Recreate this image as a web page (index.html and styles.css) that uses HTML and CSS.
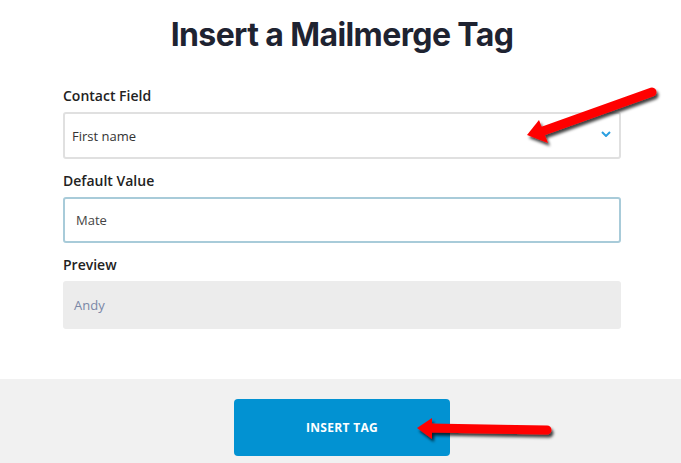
FILE: index.html
```html
<!DOCTYPE html>
<html>
<head>
<meta charset="utf-8">
<link rel="stylesheet" href="styles.css">
</head>
<body>
<div class="page">
  <main class="form">
    <h1 class="title">Insert a Mailmerge Tag</h1>
    <div class="field">
      <label class="label">Contact Field</label>
      <div class="box select">
        <span class="value">First name</span>
        <svg class="chev" width="10" height="6" viewBox="0 0 10 6"><path d="M1 1 L5 5 L9 1" fill="none" stroke="#2a9fe0" stroke-width="2"/></svg>
      </div>
    </div>
    <div class="field">
      <label class="label">Default Value</label>
      <div class="box input"><span class="value">Mate</span></div>
    </div>
    <div class="field">
      <label class="label">Preview</label>
      <div class="box preview"><span class="value">Andy</span></div>
    </div>
  </main>
  <footer class="footer">
    <button class="btn">INSERT TAG</button>
  </footer>
  <svg class="arrows" width="681" height="463" viewBox="0 0 681 463">
    <defs>
      <filter id="sh" x="-20%" y="-20%" width="140%" height="160%">
        <feDropShadow dx="2" dy="3" stdDeviation="1.6" flood-color="#000" flood-opacity="0.75"/>
      </filter>
    </defs>
    <g filter="url(#sh)" fill="#ff0000">
      <path d="M652 92 L543 131" stroke="#ff0000" stroke-width="9" stroke-linecap="round"/>
      <polygon points="527,135 539,120 548,143"/>
      <path d="M430 428 L547 430" stroke="#ff0000" stroke-width="9" stroke-linecap="round"/>
      <polygon points="417,428 432,418 432,439"/>
    </g>
  </svg>
</div>
</body>
</html>
```
FILE: styles.css
```css
* { box-sizing: border-box; }
html, body { margin: 0; padding: 0; background: #fff; }
.page {
  position: relative;
  width: 681px;
  height: 463px;
  overflow: hidden;
  display: flex;
  flex-direction: column;
}
.form {
  padding: 15px 60px 0 63px;
  display: flex;
  flex-direction: column;
  gap: 12px;
  height: 379px;
}
.title {
  margin: 0 0 19px 0;
  font-family: "Inter", sans-serif;
  font-weight: 700;
  font-size: 32px;
  line-height: 40px;
  letter-spacing: -0.6px;
  color: #1e2331;
  text-align: center;
}
.field {
  display: flex;
  flex-direction: column;
  gap: 6px;
}
.label {
  font-family: "Open Sans", sans-serif;
  font-weight: 600;
  font-size: 14px;
  line-height: 20px;
  color: #222;
}
.box {
  height: 47px;
  border-radius: 3px;
  display: flex;
  align-items: center;
  font-family: "Open Sans", sans-serif;
  font-size: 13px;
}
.select {
  border: 2px solid #e0e0e0;
  padding: 0 7px;
  justify-content: space-between;
  color: #333;
}
.chev { margin-right: 1px; margin-top: -3px; }
.input {
  height: 46px;
  border: 2px solid #a8cbd9;
  padding: 0 11px;
  color: #444;
}
.preview {
  height: 48px;
  background: #ececec;
  padding: 0 11px;
  color: #7a87a6;
}
.footer {
  flex: 1;
  background: #f1f1f1;
  display: flex;
  justify-content: center;
  padding-top: 20px;
}
.btn {
  width: 216px;
  height: 57px;
  border: none;
  border-radius: 4px;
  background: #0292d2;
  color: #fff;
  font-family: "Open Sans", sans-serif;
  font-weight: 700;
  font-size: 12px;
  letter-spacing: 0.3px;
  margin-left: 3px;
}
.arrows {
  position: absolute;
  left: 0;
  top: 0;
  pointer-events: none;
}
```
